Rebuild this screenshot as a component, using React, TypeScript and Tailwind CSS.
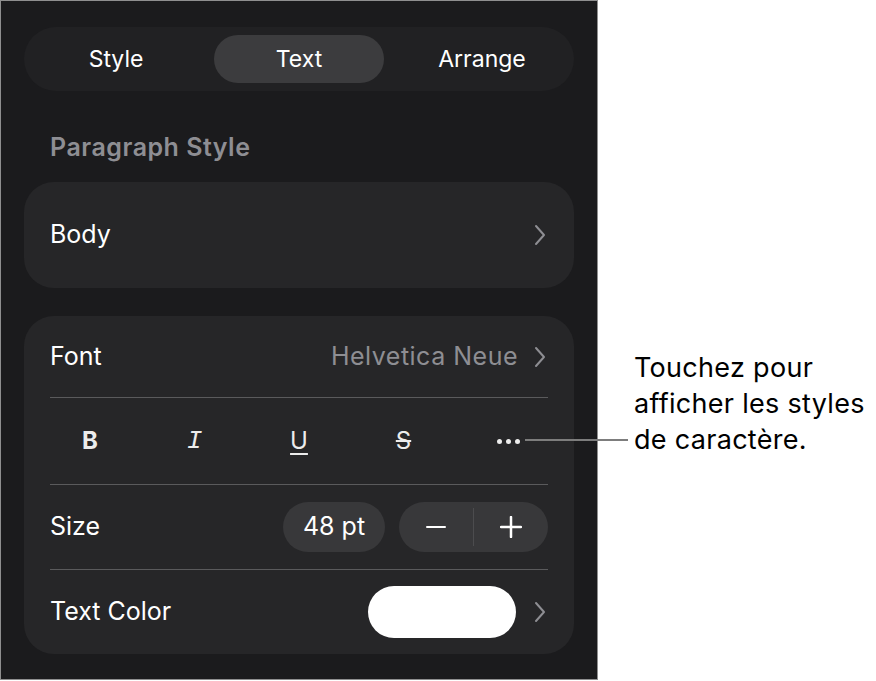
import React from 'react';

const font = { fontFamily: 'Inter, "Noto Sans", sans-serif' };

function Chevron() {
  return (
    <svg width="12" height="22" viewBox="0 0 12 22" fill="none" className="shrink-0">
      <polyline points="2,2 10,11 2,20" stroke="#8e8e93" strokeWidth="2" strokeLinecap="round" strokeLinejoin="round" />
    </svg>
  );
}

function Divider() {
  return <div className="h-px bg-[#5a5a5c]" />;
}

const tabs = ['Style', 'Text', 'Arrange'];

export default function App() {
  return (
    <div className="relative flex w-[876px] h-[681px] bg-white" style={font}>
      {/* format panel */}
      <div className="w-[598px] h-[680px] border border-[#8f8f8f] bg-[#1b1b1d] px-[23px] pt-[26px]">
        <div className="flex h-[64px] items-center justify-between rounded-full bg-[#212123] px-[7px]">
          {tabs.map((t) => (
            <div
              key={t}
              className={
                'flex h-[48px] w-[170px] items-center justify-center rounded-full text-[23px] text-white ' +
                (t === 'Text' ? 'bg-[#3c3c3e]' : '')
              }
            >
              {t}
            </div>
          ))}
        </div>

        <div className="mt-[41px] pl-[26px] text-[25px] font-semibold tracking-[0.5px] text-[#8e8e93] leading-[30px]">
          Paragraph Style
        </div>

        <div className="mt-[20px] flex h-[106px] items-center justify-between rounded-[30px] bg-[#262628] pl-[26px] pr-[28px]">
          <span className="text-[25px] text-white">Body</span>
          <Chevron />
        </div>

        <div className="mt-[28px] rounded-[30px] bg-[#262628] pl-[26px] pr-[26px]">
          <div className="flex h-[81px] items-center justify-between">
            <span className="text-[25px] text-white">Font</span>
            <div className="flex items-center gap-[16px] pr-[2px]">
              <span className="text-[25px] tracking-[0.5px] text-[#8e8e93]">Helvetica Neue</span>
              <Chevron />
            </div>
          </div>
          <Divider />
          <div className="flex h-[86px] items-center justify-between text-[#ececec]">
            <div className="flex w-[80px] justify-center text-[24px] font-bold">B</div>
            <div className="flex w-[80px] justify-center text-[26px] italic" style={{ fontFamily: '"Liberation Mono", monospace' }}>I</div>
            <div className="flex w-[80px] justify-center text-[24px] underline underline-offset-[4px] decoration-[2px]">U</div>
            <div className="flex w-[80px] justify-center text-[24px] line-through decoration-[2px]">S</div>
            <div className="flex w-[80px] justify-center gap-[4px]">
              <span className="h-[5px] w-[5px] rounded-full bg-[#ececec]" />
              <span className="h-[5px] w-[5px] rounded-full bg-[#ececec]" />
              <span className="h-[5px] w-[5px] rounded-full bg-[#ececec]" />
            </div>
          </div>
          <Divider />
          <div className="flex h-[84px] items-center justify-between">
            <span className="text-[25px] text-white">Size</span>
            <div className="flex items-center gap-[14px]">
              <div className="flex h-[50px] w-[102px] items-center justify-center rounded-full bg-[#38383a] text-[25px] text-white">
                48 pt
              </div>
              <div className="flex h-[50px] w-[149px] items-center rounded-full bg-[#38383a]">
                <div className="flex flex-1 justify-center">
                  <span className="h-[2.5px] w-[20px] rounded bg-white" />
                </div>
                <span className="h-[38px] w-px bg-[#4c4c4e]" />
                <div className="flex flex-1 justify-center">
                  <svg width="22" height="22" viewBox="0 0 22 22">
                    <path d="M11 1v20M1 11h20" stroke="white" strokeWidth="2.5" strokeLinecap="round" />
                  </svg>
                </div>
              </div>
            </div>
          </div>
          <Divider />
          <div className="flex h-[84px] items-center justify-between">
            <span className="text-[25px] text-white">Text Color</span>
            <div className="flex items-center gap-[18px] pr-[2px]">
              <div className="h-[52px] w-[148px] rounded-full bg-white" />
              <Chevron />
            </div>
          </div>
        </div>
      </div>

      {/* callout */}
      <div className="pl-[36px] pt-[350px] text-[27px] tracking-[0.3px] leading-[36px] text-black">
        <div>Touchez pour</div>
        <div>afficher les styles</div>
        <div>de caractère.</div>
      </div>
      <div className="absolute left-[525px] top-[439px] h-[2px] w-[103px] bg-[#7d7d7d]" />
    </div>
  );
}
